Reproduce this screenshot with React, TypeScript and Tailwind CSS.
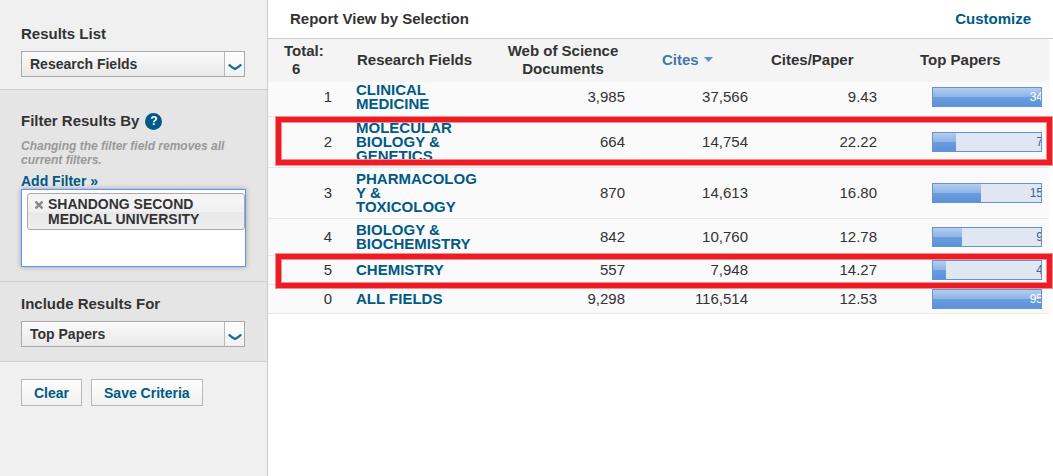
import React from 'react';

const fields = [
  { rank: 1, name: 'CLINICAL MEDICINE', docs: '3,985', cites: '37,566', ratio: '9.43', top: '34', fill: 100 },
  { rank: 2, name: 'MOLECULAR BIOLOGY & GENETICS', docs: '664', cites: '14,754', ratio: '22.22', top: '7', fill: 21.5 },
  { rank: 3, name: 'PHARMACOLOGY & TOXICOLOGY', docs: '870', cites: '14,613', ratio: '16.80', top: '15', fill: 44.5 },
  { rank: 4, name: 'BIOLOGY & BIOCHEMISTRY', docs: '842', cites: '10,760', ratio: '12.78', top: '9', fill: 27 },
  { rank: 5, name: 'CHEMISTRY', docs: '557', cites: '7,948', ratio: '14.27', top: '4', fill: 12 },
  { rank: 0, name: 'ALL FIELDS', docs: '9,298', cites: '116,514', ratio: '12.53', top: '95', fill: 100 }
];

const SelectBox = ({ id, options }: { id: string; options: string[] }) => (
  <div className="relative">
    <select
      id={id}
      className="block w-full h-[26px] appearance-none border border-[#a9a9a9] bg-linear-to-b from-[#fbfbfb] to-[#e9e9e9] pl-2 pr-6 text-sm leading-5 font-bold text-[#333]"
    >
      {options.map((option) => (
        <option key={option}>{option}</option>
      ))}
    </select>
    <div className="pointer-events-none absolute inset-y-px right-px w-5 border-l border-[#b8b8b8] bg-linear-to-b from-white to-[#f1f1f1] flex items-center justify-center pt-1.5">
      <svg width="14" height="8" viewBox="0 0 14 8" fill="none">
        <path d="M0.8 1.4 Q2.8 3.6 7 6 Q11.2 3.6 13.2 1.4" stroke="#1a6a94" strokeWidth="2.2" />
      </svg>
    </div>
  </div>
);

const TopPapersBar = ({ value, fill }: { value: string; fill: number }) => (
  <div className="relative h-5 overflow-hidden border border-[#6492d2] bg-[#e0e7f2]">
    <div
      className="h-full bg-[linear-gradient(to_bottom,#b3cdef_0%,#8db3e5_50%,#6b9ddf_50%,#5c92d9_100%)]"
      style={{ width: `${fill}%` }}
    ></div>
    <span
      className={`absolute inset-y-0 -right-0.5 text-xs leading-[18px] ${fill === 100 ? 'text-white' : 'text-[#3f6291]'}`}
    >
      {value}
    </span>
  </div>
);

const Sidebar = () => (
  <aside className="w-[268px] shrink-0 border-r border-[#cccccc] bg-[#f0f0f0]">
    <section className="border-b border-[#cfcfcf] pl-[21px] pr-[22px] pt-6 pb-3">
      <label htmlFor="results-list" className="mb-[7px] block text-[15px] leading-5 font-bold">
        Results List
      </label>
      <SelectBox id="results-list" options={['Research Fields', 'Institutions', 'Countries']} />
    </section>

    <section className="border-b border-[#cfcfcf] bg-[#e5e5e5] pl-[21px] pr-[21px] pt-[21px] pb-3.5">
      <div className="flex items-center gap-1.5">
        <h2 className="text-[15px] leading-5 font-bold">Filter Results By</h2>
        <button
          aria-label="Help"
          className="flex h-[17px] w-[17px] items-center justify-center rounded-full bg-[#005a84] text-xs font-bold text-white"
        >
          ?
        </button>
      </div>
      <p className="mt-2 text-xs leading-[14px] font-bold italic text-[#999]">
        Changing the filter field removes all current filters.
      </p>
      <a href="#add-filter" className="mt-1.5 block text-sm leading-4 font-bold text-[#005a84]">
        Add Filter »
      </a>
      <div className="h-[78px] border border-[#5897fb] bg-white pl-[5px] pt-[3px] shadow-[0_0_5px_rgba(0,0,0,0.3)]">
        <div className="flex gap-1 rounded-[3px] border border-[#aaa] bg-[linear-gradient(to_bottom,#f4f4f4_20%,#f0f0f0_50%,#e8e8e8_52%,#eee_100%)] pl-[7px] pt-[3px] pb-[2px]">
          <button aria-label="Remove filter" className="mt-1 h-2 w-2 shrink-0">
            <svg width="8" height="8" viewBox="0 0 8 8" stroke="#888" strokeWidth="2.4">
              <path d="M0.5 0.5 L7.5 7.5 M7.5 0.5 L0.5 7.5" />
            </svg>
          </button>
          <span className="w-40 pl-px text-sm leading-[15px] font-bold">SHANDONG SECOND MEDICAL UNIVERSITY</span>
        </div>
      </div>
    </section>

    <section className="border-b border-[#cfcfcf] bg-[#e5e5e5] pl-[21px] pr-[22px] pt-3 pb-3.5">
      <label htmlFor="include-results" className="mb-[7px] block text-[15px] leading-5 font-bold">
        Include Results For
      </label>
      <SelectBox id="include-results" options={['Top Papers', 'Highly Cited Papers', 'Hot Papers']} />
    </section>

    <div className="flex gap-[9px] pl-[21px] pt-[17px]">
      <button className="h-[27px] border border-[#b8b8b8] bg-linear-to-b from-white to-[#f0f0f0] px-3 text-sm leading-5 font-bold text-[#005a84]">
        Clear
      </button>
      <button className="h-[27px] border border-[#b8b8b8] bg-linear-to-b from-white to-[#f0f0f0] px-3 text-sm leading-5 font-bold text-[#005a84]">
        Save Criteria
      </button>
    </div>
  </aside>
);

const ReportTable = () => (
  <table className="w-full table-fixed border-separate border-spacing-0 text-[15px]">
    <colgroup>
      <col className="w-[78px]" />
      <col className="w-[142px]" />
      <col className="w-[150px]" />
      <col className="w-[123px]" />
      <col className="w-[129px]" />
      <col />
    </colgroup>
    <thead className="bg-[#f4f4f4] leading-[18px]">
      <tr className="h-[43px]">
        <th className="pl-4 pb-0.5 text-left">
          Total:
          <br />
          <span className="pl-2">6</span>
        </th>
        <th className="pl-[11px] pb-0.5 text-left">Research Fields</th>
        <th className="px-4 pb-0.5 text-center">Web of Science Documents</th>
        <th className="pl-6 pb-0.5 text-left">
          <button className="flex items-center gap-[5px] font-bold text-[#4577a8]">
            Cites
            <svg width="9" height="6" viewBox="0 0 9 6" fill="#5b8fd0">
              <path d="M0 0 H9 L4.5 5 Z" />
            </svg>
          </button>
        </th>
        <th className="pl-2.5 pb-0.5 text-left">Cites/Paper</th>
        <th className="pl-[30px] pb-0.5 text-left">Top Papers</th>
      </tr>
    </thead>
    <tbody className="bg-[#fafafa] [&_td]:border-b [&_td]:border-[#e8e8e8] [&_td]:py-1 [&>tr:first-child>td]:pt-px [&>tr:first-child>td]:pb-[5px]">
      {fields.map((field) => (
        <tr key={field.name} className="leading-[14px]">
          <td className="pr-3.5 text-right">{field.rank}</td>
          <td className="pl-2.5 pr-1 font-bold wrap-break-word">
            <a href="#field" className="text-[#005a84]">
              {field.name}
            </a>
          </td>
          <td className="pr-[13px] text-right">{field.docs}</td>
          <td className="pr-[13px] text-right">{field.cites}</td>
          <td className="pr-[13px] text-right">{field.ratio}</td>
          <td className="pl-[42px] pr-[7px]">
            <TopPapersBar value={field.top} fill={field.fill} />
          </td>
        </tr>
      ))}
    </tbody>
  </table>
);

const App = () => {
  return (
    <div className="flex min-h-screen bg-white font-['Liberation_Sans',Arial,sans-serif] text-[#333]">
      <Sidebar />
      <main className="relative min-w-0 flex-1">
        <header className="flex items-center justify-between border-b border-[#cccccc] pl-[22px] pr-[22px] pt-[9px] pb-[9px] text-[15px] leading-5 font-bold">
          <h1>Report View by Selection</h1>
          <a href="#customize" className="text-[#005a84]">
            Customize
          </a>
        </header>
        <div className="pr-1">
          <ReportTable />
        </div>

        {/* highlighted rows */}
        <div className="pointer-events-none absolute left-2 right-px top-[117px] h-12 border-5 border-[#ed1c24] shadow-[0_0_0_1px_#f58c90,inset_0_0_0_1px_#f58c90]"></div>
        <div className="pointer-events-none absolute left-2 right-px top-[254px] h-[34px] border-5 border-[#ed1c24] shadow-[0_0_0_1px_#f58c90,inset_0_0_0_1px_#f58c90]"></div>
      </main>
    </div>
  );
};

export default App;
